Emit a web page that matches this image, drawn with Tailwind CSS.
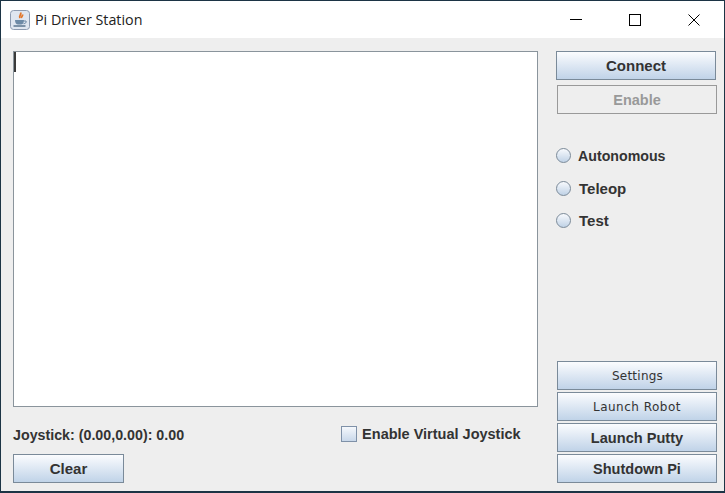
<!DOCTYPE html>
<html lang="en">
<head>
    <meta charset="UTF-8">
    <title>Pi Driver Station</title>
    <script src="https://cdn.jsdelivr.net/npm/@tailwindcss/browser@4"></script>
</head>
<body class="w-[725px] h-[493px] overflow-hidden bg-[#eeeeee] font-['Liberation_Sans',Arial,sans-serif] text-[#333333]">
    <div class="flex flex-col w-[725px] h-[493px] border-t border-l border-r border-b-2 border-[#1c3445]">
        <!-- title bar -->
        <div class="flex items-center h-[37px] shrink-0 bg-white">
            <svg class="ml-[9px] w-5 h-5" viewBox="0 0 20 20">
                <rect x="0.5" y="0.5" width="19" height="19" rx="3" fill="#dfe6f0" stroke="#8d9bb0"/>
                <path d="M10.5 2.5c1.5 2-1.800 3-.6 5.500M12.500 4.500c.5 1.500-1.500 2-.8 3.500" fill="none" stroke="#e2762a" stroke-width="1.800"/>
                <path d="M5 10h9c0 3-1.500 4.500-3 4.500H8c-1.500 0-3-1.500-3-4.500z" fill="#6d8aa6"/>
                <path d="M14 11h2c.8 1.500-.5 2.500-2.500 2.700" fill="none" stroke="#6d8aa6"/>
                <path d="M3.500 16h12" stroke="#5b7690" stroke-width="1.500"/>
            </svg>
            <span class="ml-[5px] text-[14.3px] text-[#222222] font-['Open_Sans',sans-serif]">Pi Driver Station</span>
            <div class="flex ml-auto items-center">
                <div class="flex justify-center items-center w-[59px]">
                    <div class="w-3 h-px bg-black"></div>
                </div>
                <div class="flex justify-center items-center w-[59px]">
                    <div class="w-[12px] h-[12px] border border-black"></div>
                </div>
                <div class="flex justify-center items-center w-[59px] mr-px">
                    <svg class="w-3 h-3" viewBox="0 0 12 12"><path d="M0.500 0.500l11 11M11.500 0.500l-11 11" stroke="#000" fill="none"/></svg>
                </div>
            </div>
        </div>

        <!-- window content -->
        <div class="flex flex-1 pl-3">
            <div class="flex flex-col w-[525px] pt-[13px]">
                <div class="w-[525px] h-[356px] shrink-0 bg-white border border-[#8a949c]">
                    <div class="w-[2px] h-[20px] bg-[#3a3a3a]"></div>
                </div>
                <div class="flex items-center h-[18px] mt-[19px] text-[14.25px] font-bold">
                    <span class="pt-0.5">Joystick: (0.00,0.00): 0.00</span>
                    <label class="flex items-center ml-[157px] mb-0.5 text-[14.5px]">
                        <span class="w-4 h-4 mr-[5px] border border-[#7f91a8] bg-gradient-to-b from-[#f5f8fc] to-[#c9d8ea]"></span>
                        <span class="pt-0.5">Enable Virtual Joystick</span>
                    </label>
                </div>
                <button class="w-[111px] h-[29px] mt-[10px] pt-0.5 text-[15px] font-bold text-[#333333] border border-[#7a8a99] bg-gradient-to-b from-[#fbfcfe] to-[#c0d3e8]">Clear</button>
            </div>

            <div class="flex flex-col w-[161px] ml-[18px] pt-[13px] pb-2">
                <button class="w-40 h-[29px] pt-0.5 text-[15px] font-bold text-[#333333] border border-[#7a8a99] bg-gradient-to-b from-[#fbfcfe] to-[#c0d3e8]">Connect</button>
                <button class="w-40 h-[29px] ml-px mt-[5px] pt-0.5 text-[14.5px] font-bold text-[#999999] border border-[#999999] bg-[#eeeeee]">Enable</button>

                <div class="flex items-center h-4 mt-[33px] text-[14.2px] font-bold">
                    <span class="w-[15px] h-[15px] rounded-full border border-[#7b8a99] bg-gradient-to-b from-[#f8fafd] to-[#c0d2e6]"></span>
                    <span class="ml-[7px] pt-[3px]">Autonomous</span>
                </div>
                <div class="flex items-center h-4 mt-[17px] text-[15px] font-bold">
                    <span class="w-[15px] h-[15px] rounded-full border border-[#7b8a99] bg-gradient-to-b from-[#f8fafd] to-[#c0d2e6]"></span>
                    <span class="ml-2 pt-0.5">Teleop</span>
                </div>
                <div class="flex items-center h-4 mt-4 text-[15px] font-bold">
                    <span class="w-[15px] h-[15px] rounded-full border border-[#7b8a99] bg-gradient-to-b from-[#f8fafd] to-[#c0d2e6]"></span>
                    <span class="ml-2 pt-0.5">Test</span>
                </div>

                <div class="flex flex-col gap-[2px] mt-auto ml-px">
                    <button class="w-40 h-[29px] text-[12px] tracking-[0.25px] pl-px text-[#333333] border border-[#7a8a99] bg-gradient-to-b from-[#fbfcfe] to-[#c0d3e8] font-['DejaVu_Sans',sans-serif]">Settings</button>
                    <button class="w-40 h-[29px] text-[12px] tracking-[0.5px] text-[#333333] border border-[#7a8a99] bg-gradient-to-b from-[#fbfcfe] to-[#c0d3e8] font-['DejaVu_Sans',sans-serif]">Launch Robot</button>
                    <button class="w-40 h-[29px] pt-0.5 text-[14.6px] font-bold text-[#333333] border border-[#7a8a99] bg-gradient-to-b from-[#fbfcfe] to-[#c0d3e8]">Launch Putty</button>
                    <button class="w-40 h-[29px] pt-0.5 text-[14.5px] font-bold text-[#333333] border border-[#7a8a99] bg-gradient-to-b from-[#fbfcfe] to-[#c0d3e8]">Shutdown Pi</button>
                </div>
            </div>
        </div>
    </div>
</body>
</html>
